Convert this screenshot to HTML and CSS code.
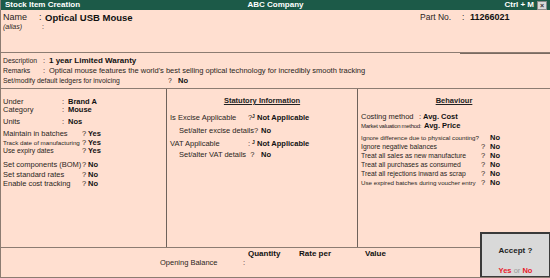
FILE: index.html
```html
<!DOCTYPE html>
<html lang="en">
<head>
    <meta charset="UTF-8">
    <title>Stock Item Creation</title>
    <link rel="stylesheet" href="styles.css">
</head>
<body>
    <div class="window">
        <div class="titlebar">
            <span class="t-left">Stock Item Creation</span>
            <span class="t-mid">ABC Company</span>
            <span class="t-right">Ctrl + M <span class="close">&times;</span></span>
        </div>

        <div class="head">
            <div class="name-block">
                <div class="name-row"><span>Name</span><span>:</span><b>Optical USB Mouse</b></div>
                <div class="alias-row"><span>(alias)</span><span>:</span></div>
            </div>
            <div class="part"><span>Part No.</span><span>:</span><b>11266021</b></div>
        </div>

        <div class="desc">
            <div class="desc-rule"></div>
            <div class="desc-row"><span class="sm">Description</span><span>:</span><b>1 year Limited Waranty</b></div>
            <div class="desc-row"><span class="sm">Remarks</span><span>:</span><span>Optical mouse features the world's best selling optical technology for incredibly smooth tracking</span></div>
            <div class="ledger-row"><span>Set/modify default ledgers for invoicing</span><span>?</span><b>No</b></div>
        </div>

        <div class="cols">
            <div class="col col-left">
                <div class="row-c first"><span>Under</span><span>:</span><b>Brand A</b></div>
                <div class="row-c"><span>Category</span><span>:</span><b>Mouse</b></div>
                <div class="row-c mt4"><span>Units</span><span>:</span><b>Nos</b></div>
                <div class="row-q mt4"><span>Maintain in batches</span><span>?</span><b>Yes</b></div>
                <div class="row-q mt1"><span class="xs">Track date of manufacturing</span><span>?</span><b>Yes</b></div>
                <div class="row-q"><span class="sm">Use expiry dates</span><span>?</span><b>Yes</b></div>
                <div class="row-q mt6"><span>Set components (BOM)</span><span>?</span><b>No</b></div>
                <div class="row-q mt2"><span>Set standard rates</span><span>?</span><b>No</b></div>
                <div class="row-q mt1"><span>Enable cost tracking</span><span>?</span><b>No</b></div>
            </div>

            <div class="col col-mid">
                <div class="col-title first">Statutory Information</div>
                <div class="row-s mt9"><span>Is Excise Applicable</span><span>?</span><span class="pick">J</span><b>Not Applicable</b></div>
                <div class="row-sub mt5"><span>Set/alter excise details?</span><b>No</b></div>
                <div class="row-s mt5"><span>VAT Applicable</span><span>:</span><span class="pick">J</span><b>Not Applicable</b></div>
                <div class="row-sub mt3"><span>Set/alter VAT details &nbsp;?</span><b>No</b></div>
            </div>

            <div class="col col-right">
                <div class="col-title first">Behaviour</div>
                <div class="row-b mt8"><span>Costing method</span><span>:</span><b>Avg. Cost</b></div>
                <div class="row-b2 mt1"><span class="narrow">Market valuation method:</span><b>Avg. Price</b></div>
                <div class="row-bq mt4"><span class="xs">Ignore difference due to physical counting?</span><span></span><b>No</b></div>
                <div class="row-bq mt1"><span class="sm">Ignore negative balances</span><span>?</span><b>No</b></div>
                <div class="row-bq mt1"><span class="sm">Treat all sales as new manufacture</span><span>?</span><b>No</b></div>
                <div class="row-bq mt1"><span class="sm">Treat all purchases as consumed</span><span>?</span><b>No</b></div>
                <div class="row-bq mt1"><span class="sm">Treat all rejections inward as scrap</span><span>?</span><b>No</b></div>
                <div class="row-bq mt1"><span class="xs">Use expired batches during voucher entry</span><span>?</span><b>No</b></div>
            </div>
        </div>

        <div class="bottom">
            <div class="heads"><b class="h-qty">Quantity</b><b class="h-rate">Rate per</b><b>Value</b></div>
            <div class="opening"><span>Opening Balance</span><span>:</span></div>
        </div>

        <div class="accept">
            <div class="accept-q">Accept ?</div>
            <div class="accept-a"><span class="yes">Yes</span> <span class="or">or</span> <span class="yes">No</span></div>
        </div>
    </div>
</body>
</html>
```

FILE: styles.css
```css
body {
    margin: 0;
    font-family: "Liberation Sans", Arial, sans-serif;
    background: #ffdfd0;
    color: #2a2522;
}

b {
    color: #111;
}

.window {
    position: relative;
    width: 550px;
    height: 278px;
    background: #ffdfd0;
    box-sizing: border-box;
    border-left: 1px solid #8c7c72;
    border-bottom: 1px solid #8c7c72;
    overflow: hidden;
}

.titlebar {
    display: grid;
    grid-template-columns: 1fr auto 1fr;
    align-items: center;
    height: 10px;
    background: #1c5a48;
    color: #fff;
    font-size: 8px;
    font-weight: bold;
    line-height: 10px;
}

.t-left {
    padding-left: 4px;
}

.t-right {
    display: flex;
    justify-content: flex-end;
    align-items: center;
    gap: 3px;
    padding-right: 3px;
}

.close {
    width: 8px;
    height: 7px;
    line-height: 7px;
    font-size: 7px;
    text-align: center;
    background: #d8d8d8;
    color: #333;
    border: 1px solid #888;
}

/* name and part number */
.head {
    display: flex;
    justify-content: space-between;
    height: 43px;
    border-bottom: 1px solid #8c7c72;
    box-sizing: border-box;
    padding-top: 2px;
}

.name-row {
    display: grid;
    grid-template-columns: 36px 6px auto;
    padding-left: 2px;
    font-size: 9px;
    line-height: 11px;
}

.name-row b {
    font-size: 9.5px;
}

.alias-row {
    display: grid;
    grid-template-columns: 39px 6px;
    padding-left: 2px;
    font-size: 7px;
    font-style: italic;
    line-height: 8px;
}

.alias-row span + span {
    font-style: normal;
}

.part {
    display: grid;
    grid-template-columns: 42px 8px auto;
    width: 130px;
    font-size: 8.5px;
    line-height: 11px;
}

.part b {
    font-size: 9px;
}

/* description block */
.desc {
    height: 36px;
    border-bottom: 1px solid #8c7c72;
    box-sizing: border-box;
    font-size: 7.5px;
}

.desc-rule {
    width: 90px;
    height: 1px;
    margin: 0 0 2px auto;
    background: #7a6a60;
}

.desc-row {
    display: grid;
    grid-template-columns: 40px 6px 1fr;
    padding-left: 2px;
    line-height: 10px;
}

.desc-row b {
    font-size: 8px;
}

.ledger-row {
    display: grid;
    grid-template-columns: 165px 10px auto;
    padding-left: 2px;
    line-height: 9px;
    font-size: 6.8px;
}

.ledger-row b {
    font-size: 7.5px;
}

.sm {
    font-size: 6.8px;
}

.xs {
    font-size: 6.2px;
}

.narrow {
    font-size: 6px;
    letter-spacing: -0.3px;
}

/* three columns */
.cols {
    display: grid;
    grid-template-columns: 166px 191px 1fr;
    height: 159px;
    border-bottom: 1px solid #8c7c72;
    box-sizing: border-box;
    font-size: 7.5px;
}

.col {
    padding-top: 8px;
}

.col-left {
    padding-top: 9px;
}

.col-left,
.col-mid {
    border-right: 1px solid #6e625b;
}

.col-title {
    text-align: center;
    font-weight: bold;
    text-decoration: underline;
    font-size: 7.5px;
    line-height: 8px;
    color: #222;
}

.row-c,
.row-q,
.row-s,
.row-sub,
.row-b,
.row-b2,
.row-bq {
    display: grid;
    line-height: 8px;
    white-space: nowrap;
}

.row-c {
    grid-template-columns: 59px 6px auto;
    padding-left: 2px;
}

.row-q {
    grid-template-columns: 79px 6px auto;
    padding-left: 2px;
}

.row-s {
    grid-template-columns: 78px 4px 5px auto;
    padding-left: 3px;
}

.row-sub {
    grid-template-columns: 82px auto;
    padding-left: 12px;
}

.row-b {
    grid-template-columns: 58px 4px auto;
    padding-left: 3px;
}

.row-b2 {
    grid-template-columns: 63px auto;
    padding-left: 3px;
}

.row-bq {
    grid-template-columns: 120px 9px auto;
    padding-left: 3px;
}

.pick {
    font-size: 5px;
    line-height: 5px;
    font-weight: bold;
    align-self: start;
}

.mt1 { margin-top: 1px; }
.mt2 { margin-top: 2px; }
.mt3 { margin-top: 3px; }
.mt4 { margin-top: 4px; }
.mt5 { margin-top: 5px; }
.mt6 { margin-top: 6px; }
.mt8 { margin-top: 8px; }
.mt9 { margin-top: 9px; }

/* opening balance */
.bottom {
    font-size: 7.5px;
}

.heads {
    display: flex;
    padding-left: 247px;
    padding-top: 1px;
    line-height: 9px;
    font-size: 8px;
}

.h-qty {
    width: 51px;
}

.h-rate {
    width: 66px;
}

.opening {
    display: grid;
    grid-template-columns: 83px 6px;
    padding-left: 159px;
    line-height: 9px;
}

.accept {
    position: absolute;
    right: 0;
    bottom: 0;
    width: 70px;
    height: 45px;
    box-sizing: border-box;
    background: #d9d9d9;
    border: 2px solid #3a3a3a;
    border-right: 1px solid #3a3a3a;
    border-bottom: 1px solid #3a3a3a;
    text-align: center;
}

.accept-q {
    padding-top: 12px;
    font-size: 8px;
    font-weight: bold;
    color: #222;
    line-height: 10px;
}

.accept-a {
    padding-top: 10px;
    font-size: 7.5px;
    line-height: 9px;
    font-weight: bold;
}

.yes {
    color: #e8202a;
}

.or {
    color: #9a9a9a;
    font-weight: normal;
}
```
